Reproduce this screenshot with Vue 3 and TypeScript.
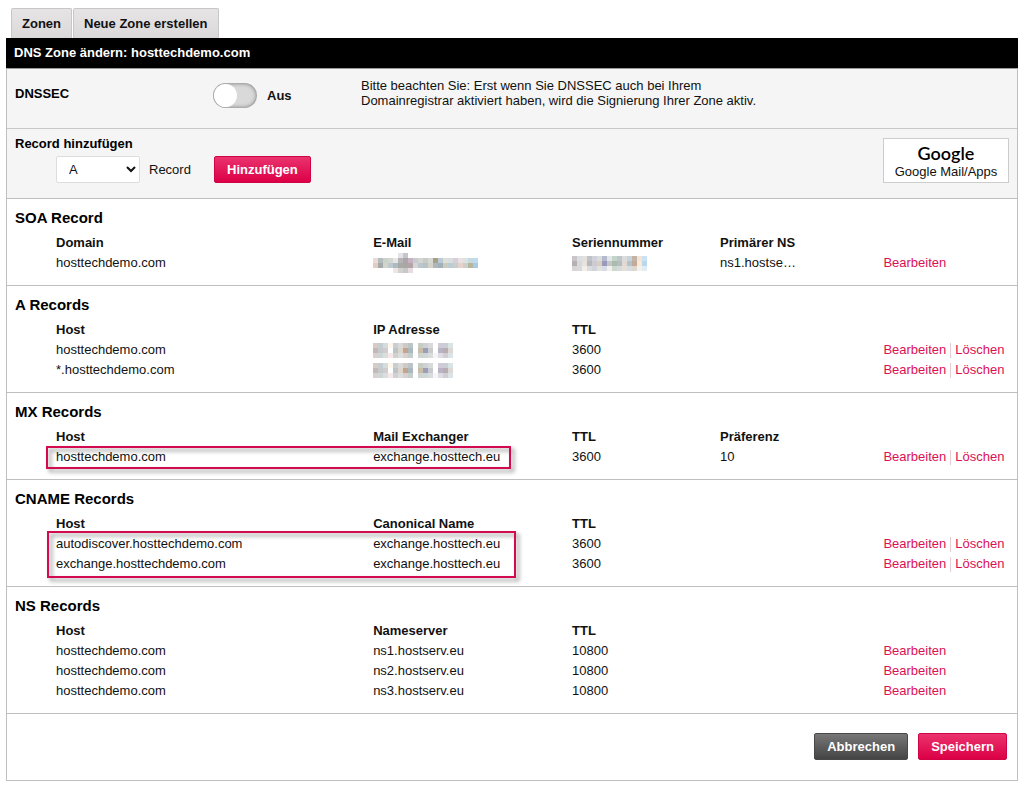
<script setup lang="ts">
import { ref } from 'vue'

interface Mosaic {
  width: number
  height: number
  rows: string[][]
}
type Cell = string | Mosaic
interface Row {
  cells: Cell[]
  removable: boolean
}
interface Section {
  id: string
  title: string
  headers: string[]
  rows: Row[]
  mark?: string
}

const split = (s: string) => s.split(' ').map((c) => (c === '-' ? 'none' : '#' + c))
const mosaic = (rows: string[]): Mosaic => {
  const cells = rows.map(split)
  return { width: cells[0].length * 5, height: cells.length * 5, rows: cells }
}

const email = mosaic([
  '- - - - - e4e4e8 c6c6ca - - - - - - - - - - - - - -',
  'eadbd5 b3bdbf c9d3c9 d3d6d0 e3e6e3 b6b4b7 aaa6a9 c8b1c1 c6ccd1 d5d5d2 c9ccc6 d5d8d5 a5a186 bacbd7 dedfd8 d8dedd d9cddc e8e1e1 dce2e2 c6d9dd bedcf0',
  'e3cec3 a6a9a9 d2d5ce bfc9cd a9bbc4 aba9a5 a7a8a8 b6a3a7 d4d7d6 bdc7cb b6c3c6 d5d2c6 aeb8bc a1b1b8 cbcbc0 bdcbd2 cacdd0 e5d2cb d0cecb b4b69d a9cae1',
  '- - - - f0e5e2 d2d2d0 c8c8c8 e7dce2 - - - - - - - - - - - - -',
])
const serial = mosaic([
  'cac5c9 d9dee3 e2e1dd bfc2c9 d2d0d8 d9dede b7b9cd e2e7eb c5d4c9 bdc7ca dadcde c9d4d8 c4b3a7 f4e5d3 c9e3f5',
  'b5b0b5 d7dadc e8e2df b6b8bd cbcbd1 d9cec0 9a9abd c3c6ca acbaae b4bdc2 e4d9d0 b4c3ca c4aa99 fae9d6 b8d8ee',
  'dad5d5 d9d9dd f3eeea dbdce0 d1d4d8 e2e1dd d9dce5 f2f1ed cfd7d1 d5dadd e6dfd7 d4dde1 dfd7cf f5f1e9 e1edf4',
])
const address = mosaic([
  'd9cbc3 c4ced0 d4ddde fff6ec c9ced0 dadada d1cac3 b9c5c6 ffffff c6cec2 cfd1d7 d9dadb ffffff d0cbd8 c9cfd4 d9e4e7',
  'c3bab7 c6cacc d1cdce ffffff bbc5c7 ded5cc c1a58f a9b9bd ffffff c9bca9 9a9fb5 c7cbcf ffffff b9b4c5 b8aeb1 dcd8d5',
  'd9d1ce ced5d5 dcdede f6e9e9 cfd1d3 dcdede dacfcd c4cecb ffffff d0d4d1 cdd6d9 d8dcdd f7f3f6 dedde4 d1ced5 dce3e7',
])

const zone = 'hosttechdemo.com'
const exchange = 'exchange.hosttech.eu'

const sections: Section[] = [
  {
    id: 'soa',
    title: 'SOA Record',
    headers: ['Domain', 'E-Mail', 'Seriennummer', 'Primärer NS'],
    rows: [{ cells: [zone, email, serial, 'ns1.hostse…'], removable: false }],
  },
  {
    id: 'a',
    title: 'A Records',
    headers: ['Host', 'IP Adresse', 'TTL', ''],
    rows: [
      { cells: [zone, address, '3600', ''], removable: true },
      { cells: ['*.' + zone, address, '3600', ''], removable: true },
    ],
  },
  {
    id: 'mx',
    title: 'MX Records',
    headers: ['Host', 'Mail Exchanger', 'TTL', 'Präferenz'],
    rows: [{ cells: [zone, exchange, '3600', '10'], removable: true }],
    mark: 'mark-mx',
  },
  {
    id: 'cname',
    title: 'CNAME Records',
    headers: ['Host', 'Canonical Name', 'TTL', ''],
    rows: [
      { cells: ['autodiscover.' + zone, exchange, '3600', ''], removable: true },
      { cells: ['exchange.' + zone, exchange, '3600', ''], removable: true },
    ],
    mark: 'mark-cname',
  },
  {
    id: 'ns',
    title: 'NS Records',
    headers: ['Host', 'Nameserver', 'TTL', ''],
    rows: ['ns1', 'ns2', 'ns3'].map((n) => ({
      cells: [zone, n + '.hostserv.eu', '10800', ''],
      removable: false,
    })),
  },
]

const recordTypes = ['A', 'AAAA', 'CAA', 'CNAME', 'MX', 'NS', 'SRV', 'TXT']
const recordType = ref('A')
const dnssec = ref(false)
</script>

<template>
  <main class="page">
    <nav class="tabs">
      <a href="#" class="tab">Zonen</a>
      <a href="#" class="tab">Neue Zone erstellen</a>
    </nav>
    <h1 class="bar">DNS Zone ändern: hosttechdemo.com</h1>
    <div class="panel">
      <section class="dnssec">
        <label class="dnssec-label" for="dnssec">DNSSEC</label>
        <div class="switch">
          <input id="dnssec" v-model="dnssec" type="checkbox" class="toggle" />
          <span class="state">{{ dnssec ? 'Ein' : 'Aus' }}</span>
        </div>
        <p class="note">
          Bitte beachten Sie: Erst wenn Sie DNSSEC auch bei Ihrem<br />
          Domainregistrar aktiviert haben, wird die Signierung Ihrer Zone aktiv.
        </p>
      </section>

      <section class="add">
        <div>
          <h2 class="add-title">Record hinzufügen</h2>
          <div class="add-row">
            <select id="type" v-model="recordType" class="type">
              <option v-for="t in recordTypes" :key="t">{{ t }}</option>
            </select>
            <label class="type-label" for="type">Record</label>
            <button type="button" class="btn primary">Hinzufügen</button>
          </div>
        </div>
        <button type="button" class="google">
          <span class="logo">Google</span>
          <span>Google Mail/Apps</span>
        </button>
      </section>

      <section v-for="s in sections" :key="s.id" class="records">
        <h2 class="title">{{ s.title }}</h2>
        <div class="table-wrap">
          <table>
            <colgroup>
              <col class="c1" /><col class="c2" /><col class="c3" /><col class="c4" /><col />
            </colgroup>
            <thead>
              <tr>
                <th v-for="(h, i) in s.headers" :key="i" scope="col">{{ h }}</th>
                <th></th>
              </tr>
            </thead>
            <tbody>
              <tr v-for="(r, ri) in s.rows" :key="ri">
                <td v-for="(c, ci) in r.cells" :key="ci">
                  <template v-if="typeof c === 'string'">{{ c }}</template>
                  <svg
                    v-else
                    class="mosaic"
                    :width="c.width"
                    :height="c.height"
                    shape-rendering="crispEdges"
                    aria-hidden="true"
                  >
                    <template v-for="(line, y) in c.rows" :key="y">
                      <rect
                        v-for="(fill, x) in line"
                        :key="x"
                        :x="x * 5"
                        :y="y * 5"
                        width="5"
                        height="5"
                        :fill="fill"
                      />
                    </template>
                  </svg>
                </td>
                <td>
                  <div class="actions">
                    <a href="#">Bearbeiten</a>
                    <a v-if="r.removable" href="#" class="remove">Löschen</a>
                  </div>
                </td>
              </tr>
            </tbody>
          </table>
          <div v-if="s.mark" class="mark" :class="s.mark"></div>
        </div>
      </section>

      <footer class="footer">
        <button type="button" class="btn dark">Abbrechen</button>
        <button type="button" class="btn primary">Speichern</button>
      </footer>
    </div>
  </main>
</template>

<style>
body {
  background: #fff;
}
</style>

<style scoped>
* {
  box-sizing: border-box;
}
.page {
  padding: 8px 6px 6px;
  font: 13px/20px 'Liberation Sans', Arial, sans-serif;
  color: #111;
}
h1,
h2,
p {
  margin: 0;
}
.tabs {
  display: flex;
  gap: 1px;
  padding-left: 5px;
}
.tab {
  height: 30px;
  padding: 0 10px;
  border: 1px solid #c8c6c7;
  border-bottom-color: #d8d6d7;
  border-radius: 2px 2px 0 0;
  background: linear-gradient(#e6e4e5, #dbd9da);
  color: #111;
  font-weight: bold;
  line-height: 29px;
  text-decoration: none;
}
.bar {
  height: 30px;
  padding-left: 8px;
  background: #000;
  color: #fff;
  font-size: 13px;
  line-height: 30px;
}
.panel {
  border: 1px solid #bfbfbf;
  border-top-color: #999;
}
.dnssec {
  display: grid;
  grid-template-columns: 198px 148px 1fr;
  min-height: 60px;
  padding: 9px 8px 0;
  border-bottom: 1px solid #c8c8c8;
  background: #f5f5f5;
}
.dnssec-label {
  padding-top: 6px;
  font-weight: bold;
}
.switch {
  display: flex;
  align-items: center;
  gap: 10px;
  height: 35px;
}
.toggle {
  appearance: none;
  display: flex;
  width: 44px;
  height: 25px;
  margin: 0;
  padding: 1px;
  border-radius: 13px;
  background: #d9d9d9;
  box-shadow: inset 0 0 4px rgba(0, 0, 0, 0.5);
}
.toggle::before {
  content: '';
  width: 23px;
  height: 23px;
  border-radius: 50%;
  background: #fff;
}
.toggle:checked {
  justify-content: flex-end;
  background: #dc0048;
}
.state {
  font-weight: bold;
}
.note {
  line-height: 15px;
}
.add {
  display: flex;
  justify-content: space-between;
  align-items: flex-start;
  min-height: 70px;
  padding: 7px 8px 0;
  border-bottom: 1px solid #bfbfbf;
  background: #f5f5f5;
}
.add-title {
  padding-bottom: 4px;
  font-size: 13px;
  line-height: 16px;
}
.add-title,
.dnssec-label,
.title {
  color: #000;
}
.add-row {
  display: flex;
  align-items: center;
  padding-left: 41px;
}
.type {
  width: 84px;
  height: 27px;
  padding: 0 1px 0 8px;
  border: 1px solid #ddd;
  border-radius: 2px;
  background: #fff;
  color: #111;
  font: inherit;
}
.type-label {
  width: 65px;
  margin-left: 9px;
}
.btn {
  height: 27px;
  padding: 0 12px;
  border: 1px solid;
  border-radius: 2px;
  color: #fff;
  font: bold 13px/25px 'Liberation Sans', Arial, sans-serif;
}
.primary {
  border-color: #cf0345;
  background: linear-gradient(#ea336e, #dc0046);
}
.dark {
  border-color: #484848;
  background: linear-gradient(#777, #444);
}
.google {
  display: flex;
  flex-direction: column;
  align-items: center;
  width: 126px;
  height: 45px;
  margin-top: 2px;
  padding: 6px 0 0;
  border: 1px solid #ccc;
  background: #fff;
  color: #111;
  font: 13px/15px 'Liberation Sans', Arial, sans-serif;
}
.logo {
  padding-bottom: 2px;
  color: #000;
  font: 600 18px/17px Lato, sans-serif;
}
.records {
  padding: 9px 0 12px 8px;
  border-bottom: 1px solid #bfbfbf;
}
.title {
  margin-bottom: 5px;
  font-size: 15px;
  line-height: 20px;
}
.table-wrap {
  position: relative;
  margin-left: 41px;
}
table {
  width: 100%;
  table-layout: fixed;
  border-collapse: collapse;
}
.c1 {
  width: 33%;
}
.c2 {
  width: 20.7%;
}
.c3 {
  width: 15.4%;
}
.c4 {
  width: 17%;
}
th,
td {
  height: 20px;
  padding: 0;
  text-align: left;
  white-space: nowrap;
}
.mosaic {
  display: block;
}
.actions {
  display: flex;
}
.actions a {
  color: #dc0f55;
  text-decoration: none;
}
.remove {
  height: 15px;
  margin: 3px 0 2px 4px;
  padding-left: 4px;
  border-left: 1px solid #e6ccd5;
  line-height: 14px;
}
.mark {
  position: absolute;
  border: 2px solid #d40a50;
  filter: drop-shadow(3px 3px 2px rgba(0, 0, 0, 0.45));
  pointer-events: none;
}
.mark-mx {
  top: 19px;
  left: -10px;
  width: 48.4%;
  height: 23px;
}
.mark-cname {
  top: 17px;
  left: -9px;
  width: 48.8%;
  height: 47px;
}
.footer {
  display: flex;
  justify-content: flex-end;
  gap: 10px;
  padding: 19px 10px 20px;
}
</style>
